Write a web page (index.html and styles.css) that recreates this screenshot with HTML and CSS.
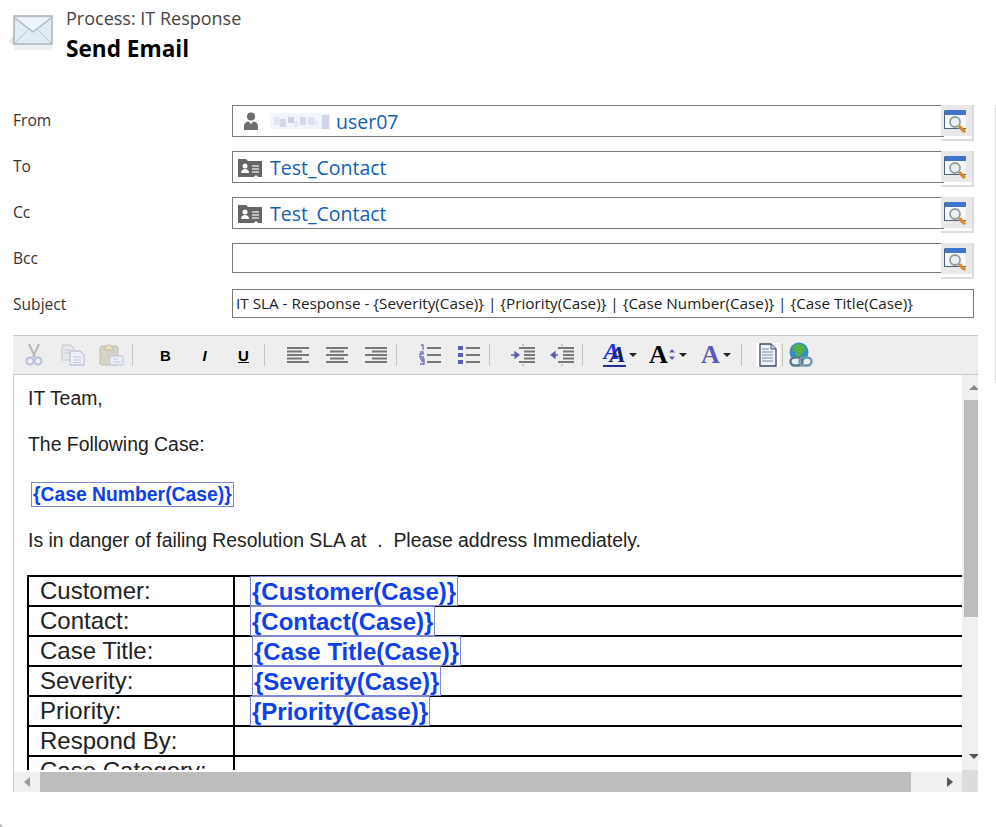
FILE: index.html
```html
<!DOCTYPE html>
<html lang="en">
<head>
  <meta charset="UTF-8">
  <title>Send Email</title>
  <link rel="stylesheet" href="styles.css">
</head>
<body>
  <div class="edge-line"></div>
  <div class="corner-mark"></div>

  <svg width="0" height="0" class="defs">
    <defs>
      <symbol id="lookup" viewBox="0 0 24 24">
        <path d="M0.500 0.500h21v18h-21z" fill="#f6f8fb"/>
        <path d="M0.500 19V0.500M0.500 18.500H22" stroke="#4e5f7c" fill="none"/>
        <rect x="1" y="0" width="21" height="5" fill="#3f73cc"/>
        <circle cx="11" cy="12" r="5" fill="#e9f0f0" stroke="#8f9e9e" stroke-width="1.800"/>
        <path d="M16 17l4 4" stroke="#d98a2b" stroke-width="3.400" stroke-linecap="round"/>
      </symbol>
      <symbol id="card" viewBox="0 0 24 20">
        <path d="M0 2h8l2 2h14v16h-4l-1-1.500h-2l-1 1.500H0z" fill="#666"/>
        <circle cx="7" cy="9" r="2.500" fill="#fff"/>
        <path d="M3 16c0-3 2-4 4-4s4 1 4 4z" fill="#fff"/>
        <path d="M14 9h7M14 12h7M14 15h7" stroke="#ddd" stroke-width="1.500"/>
      </symbol>
    </defs>
  </svg>

  <header class="page-head">
    <svg class="mail-icon" width="44" height="42" viewBox="0 0 44 42">
      <path d="M0 27l6 6V20z" fill="#e2e6e6"/>
      <rect x="5" y="2" width="38" height="28" fill="#dfecf5" stroke="#a9b3b8" stroke-width="1.500"/>
      <path d="M6 4l18 14L42 4" fill="#eef5fa" stroke="#a9b6bd" stroke-width="1.300"/>
      <path d="M6 29l14-14M42 29L28 15" fill="none" stroke="#b6c4cc"/>
      <rect x="5" y="31" width="38" height="5" fill="#eef0f0"/>
    </svg>
    <div class="head-text">
      <div class="process">Process: IT Response</div>
      <h1>Send Email</h1>
    </div>
  </header>

  <form class="mail-form">
    <div class="row">
      <label>From</label>
      <div class="field">
        <svg class="person" width="16" height="20" viewBox="0 0 16 20">
          <circle cx="8" cy="5.500" r="4" fill="#6e6e6e"/>
          <path d="M1 19v-4c0-3 3-4.500 4.500-4.500L8 13l2.500-2.500C12 10.500 15 12 15 15v4z" fill="#6e6e6e"/>
        </svg>
        <svg class="blurred" width="60" height="16" viewBox="0 0 60 16">
          <rect width="60" height="16" fill="#f2f5fb"/>
          <rect x="4" y="4" width="6" height="8" fill="#e2e6f4"/>
          <rect x="10" y="6" width="6" height="8" fill="#d3d8ec"/>
          <rect x="18" y="4" width="6" height="6" fill="#ccd2ea"/>
          <rect x="24" y="8" width="4" height="6" fill="#e4e7f4"/>
          <rect x="30" y="4" width="6" height="8" fill="#d3d8ec"/>
          <rect x="38" y="4" width="6" height="8" fill="#dde1f1"/>
          <rect x="44" y="8" width="4" height="4" fill="#e8ebf5"/>
          <rect x="52" y="2" width="7" height="14" fill="#ced4ea"/>
        </svg>
        <a class="link">user07</a>
      </div>
      <div class="lookup"><svg width="24" height="24"><use href="#lookup"/></svg></div>
    </div>
    <div class="row">
      <label>To</label>
      <div class="field">
        <svg class="card" width="24" height="20"><use href="#card"/></svg>
        <a class="link">Test_Contact</a>
      </div>
      <div class="lookup"><svg width="24" height="24"><use href="#lookup"/></svg></div>
    </div>
    <div class="row">
      <label>Cc</label>
      <div class="field">
        <svg class="card" width="24" height="20"><use href="#card"/></svg>
        <a class="link">Test_Contact</a>
      </div>
      <div class="lookup"><svg width="24" height="24"><use href="#lookup"/></svg></div>
    </div>
    <div class="row">
      <label>Bcc</label>
      <div class="field empty"></div>
      <div class="lookup"><svg width="24" height="24"><use href="#lookup"/></svg></div>
    </div>
    <div class="row">
      <label>Subject</label>
      <div class="subject">IT SLA - Response - {Severity(Case)} | {Priority(Case)} | {Case Number(Case)} | {Case Title(Case)}</div>
    </div>
  </form>

  <section class="editor">
    <div class="toolbar">
      <span class="tool"><svg width="18" height="24" viewBox="0 0 18 24"><path d="M4 1l6 13M14 1L8 14" stroke="#b9b9b9" stroke-width="2" fill="none"/><circle cx="5" cy="18" r="3.500" fill="none" stroke="#b7bfe0" stroke-width="2"/><circle cx="13" cy="18" r="3.500" fill="none" stroke="#b7bfe0" stroke-width="2"/></svg></span>
      <span class="tool"><svg width="24" height="22" viewBox="0 0 24 22"><path d="M1 1h9l3 3v12H1z" fill="#e8e8e8" stroke="#c4c4c4"/><path d="M3 6h6M3 9h6" stroke="#c8c8c8"/><path d="M9 7h10l4 4v10H9z" fill="#eef0f6" stroke="#bfc4dc" stroke-width="1.300"/><path d="M12 13h8M12 16h8M12 18.500h8" stroke="#c2c6dc"/></svg></span>
      <span class="tool"><svg width="25" height="24" viewBox="0 0 25 24"><rect x="1" y="3" width="18" height="19" rx="2" fill="#d6d2c4" stroke="#c2c0b4"/><path d="M6 5l3-3h2l3 3v2H6z" fill="#e8e2bc" stroke="#bdbdae"/><path d="M11 13h13v9H11z" fill="#edf0f7" stroke="#bfc4dc"/><path d="M14 16h5M14 19h8" stroke="#c2c6dc"/></svg></span>
      <span class="sep"></span>
      <span class="tool fmt">B</span>
      <span class="tool fmt italic">I</span>
      <span class="tool fmt under">U</span>
      <span class="sep"></span>
      <span class="tool"><svg width="22" height="18" viewBox="0 0 22 18"><path d="M0 2h22M0 5.500h15M0 9h22M0 12.500h15M0 16h22" stroke="#777" stroke-width="2"/></svg></span>
      <span class="tool"><svg width="22" height="18" viewBox="0 0 22 18"><path d="M0 2h22M4 5.500h14M0 9h22M4 12.500h14M0 16h22" stroke="#777" stroke-width="2"/></svg></span>
      <span class="tool"><svg width="22" height="18" viewBox="0 0 22 18"><path d="M0 2h22M7 5.500h15M0 9h22M7 12.500h15M0 16h22" stroke="#777" stroke-width="2"/></svg></span>
      <span class="sep"></span>
      <span class="tool"><svg width="22" height="22" viewBox="0 0 22 22"><path d="M8 4h14M8 11h14M8 18h14" stroke="#777" stroke-width="2"/><path d="M2 1h2v5M1 8h3v2H1v3h4M1 15h4v2H2h3v3H1" fill="none" stroke="#6d6db8" stroke-width="1.300"/></svg></span>
      <span class="tool"><svg width="22" height="20" viewBox="0 0 22 20"><path d="M8 3h14M8 10h14M8 17h14" stroke="#777" stroke-width="2"/><path d="M0 1h5v4H0zM0 8h5v4H0zM0 15h5v4H0z" fill="#5c5cb0"/></svg></span>
      <span class="sep"></span>
      <span class="tool"><svg width="24" height="24" viewBox="0 0 24 24"><path d="M12 1v2M12 21v2" stroke="#999"/><path d="M8 5h16M13 8.500h11M13 12h11M13 15.500h11M8 19h16" stroke="#777" stroke-width="2"/><path d="M0 12h6M4 9l4 3-4 3z" stroke="#5c5cb0" stroke-width="1.300" fill="#5c5cb0"/></svg></span>
      <span class="tool"><svg width="24" height="24" viewBox="0 0 24 24"><path d="M12 1v2M12 21v2" stroke="#999"/><path d="M8 5h16M13 8.500h11M13 12h11M13 15.500h11M8 19h16" stroke="#777" stroke-width="2"/><path d="M8 12H2M5 9l-4 3 4 3z" stroke="#5c5cb0" stroke-width="1.300" fill="#5c5cb0"/></svg></span>
      <span class="sep"></span>
      <span class="tool wide"><span class="big-a colored">A</span><span class="caret"></span></span>
      <span class="tool wide"><span class="big-a black">A</span><svg width="8" height="12" viewBox="0 0 8 12"><path d="M4 0l3 3.500H1zM4 11L1 7.500h6z" fill="#5c5cb0"/></svg><span class="caret"></span></span>
      <span class="tool wide"><span class="big-a purple">A</span><span class="caret"></span></span>
      <span class="sep"></span>
      <span class="doc"><svg width="18" height="24" viewBox="0 0 18 24"><path d="M1 1h11l5 5v17H1z" fill="#eef2f8" stroke="#3b4a68" stroke-width="1.300"/><path d="M3 6h7M3 9h11M3 12h11M3 15h11M3 18h11" stroke="#7f8aa0"/><path d="M12 1v5h5" fill="#cfd6e4" stroke="#3b4a68"/></svg></span>
      <span class="sep small"></span>
      <span class="web"><svg width="24" height="26" viewBox="0 0 24 26"><circle cx="10" cy="10" r="9.500" fill="#2f8fc8"/><path d="M4 4c3-2 7-3 10-1l3 5-4 4-3 6-3-3-1-5-3-2z" fill="#53b04a"/><rect x="1.500" y="15.500" width="12" height="8" rx="4" fill="#e8eef2" stroke="#56788f" stroke-width="2.400"/><rect x="10.500" y="15.500" width="12" height="8" rx="4" fill="none" stroke="#7495ab" stroke-width="2.400"/></svg></span>
    </div>

    <div class="editor-body">
      <div class="content">
        <p class="first">IT Team,</p>
        <p>The Following Case:</p>
        <div class="case-no"><span class="token">{Case Number(Case)}</span></div>
        <p class="after-case">Is in danger of failing Resolution SLA at &nbsp;.&nbsp; Please address Immediately.</p>
        <table class="case-table">
          <tr><td class="name">Customer:</td><td class="val"><span class="token">{Customer(Case)}</span></td></tr>
          <tr><td class="name">Contact:</td><td class="val"><span class="token">{Contact(Case)}</span></td></tr>
          <tr><td class="name">Case Title:</td><td class="val shift"><span class="token">{Case Title(Case)}</span></td></tr>
          <tr><td class="name">Severity:</td><td class="val shift"><span class="token">{Severity(Case)}</span></td></tr>
          <tr><td class="name">Priority:</td><td class="val"><span class="token">{Priority(Case)}</span></td></tr>
          <tr><td class="name">Respond By:</td><td class="val"></td></tr>
          <tr><td class="name">Case Category:</td><td class="val"></td></tr>
        </table>
      </div>
      <div class="vscroll">
        <span class="arrow up"></span>
        <span class="vthumb"></span>
        <span class="arrow down"></span>
      </div>
      <div class="hscroll">
        <span class="arrow left"></span>
        <span class="hthumb"></span>
        <span class="arrow right"></span>
      </div>
      <div class="scroll-corner"></div>
    </div>
  </section>
</body>
</html>
```

FILE: styles.css
```css
body {
  margin: 0;
  height: 827px;
  overflow: hidden;
  background: white;
  font-family: "Open Sans", sans-serif;
  color: #333;
  position: relative;
}
.defs {
  position: absolute;
}
.edge-line {
  position: absolute;
  left: 995px;
  top: 105px;
  width: 1px;
  height: 278px;
  background: #dcdcdc;
}
.corner-mark {
  position: absolute;
  left: 0;
  bottom: 0;
  width: 0;
  height: 0;
  border-left: 3px solid #bbb;
  border-top: 4px solid transparent;
}

.page-head {
  display: flex;
  height: 105px;
  padding-left: 9px;
  box-sizing: border-box;
}
.mail-icon {
  margin-top: 14px;
  margin-right: 13px;
  flex: none;
}
.process {
  font-size: 18px;
  line-height: 22px;
  margin-top: 7px;
  color: #444;
}
.page-head h1 {
  margin: 5px 0 0;
  font-size: 22.6px;
  line-height: 30px;
  font-weight: bold;
  color: black;
}

.mail-form {
  padding-left: 13px;
}
.row {
  display: flex;
  align-items: flex-start;
  height: 46px;
}
.row label {
  width: 219px;
  flex: none;
  font-size: 15.6px;
  line-height: 30px;
}
.field {
  width: 709px;
  height: 32px;
  box-sizing: border-box;
  border: 1px solid #7b7b7b;
  border-right: none;
  display: flex;
  align-items: center;
  position: relative;
}
.field::after {
  content: "";
  position: absolute;
  right: -3px;
  bottom: -1px;
  width: 3px;
  height: 1px;
  background: #7b7b7b;
  z-index: 1;
}
.field.empty {
  height: 30px;
}
.field.empty::after {
  display: none;
}
.person {
  margin-left: 10px;
}
.blurred {
  margin-left: 11px;
  margin-right: 6px;
}
.card {
  margin-left: 5px;
  margin-right: 8px;
}
.link {
  font-size: 19.5px;
  color: #1160b7;
  margin-top: 1px;
}
.lookup {
  width: 33px;
  height: 36px;
  flex: none;
  box-sizing: border-box;
  padding: 5px 0 0 3px;
  background: linear-gradient(#e8e8e8 31px, white 31px);
  border-right: 2px solid #ddd;
  border-bottom: 2px solid #ddd;
}
.lookup svg {
  display: block;
}
.subject {
  width: 742px;
  height: 29px;
  box-sizing: border-box;
  border: 1px solid #7b7b7b;
  font-size: 15.27px;
  line-height: 27px;
  padding-left: 3px;
  color: #222;
  white-space: nowrap;
  overflow: hidden;
}

.editor {
  margin-left: 13px;
  width: 965px;
}
.toolbar {
  height: 40px;
  box-sizing: border-box;
  background: #eee;
  border-top: 1px solid #c8c8c8;
  border-bottom: 1px solid #c8c8c8;
  display: flex;
  align-items: center;
  padding-left: 1px;
}
.tool {
  width: 39px;
  flex: none;
  height: 26px;
  display: flex;
  align-items: center;
  justify-content: center;
}
.tool.wide {
  width: 48px;
}
.sep {
  width: 1px;
  height: 22px;
  flex: none;
  margin: 0 13px 0 1px;
  background: #c4c4b8;
}
.sep.small {
  margin: 0 6px 0 2px;
}
.fmt {
  font-family: "Liberation Sans", sans-serif;
  font-weight: bold;
  font-size: 15px;
  color: black;
}
.italic {
  font-style: italic;
}
.under {
  text-decoration: underline;
}
.big-a {
  font-family: "Liberation Serif", serif;
  font-weight: bold;
  font-size: 26px;
  line-height: 22px;
}
.big-a.black {
  color: black;
}
.big-a.purple {
  color: #5a5ab4;
}
.big-a.colored {
  color: #14206e;
  font-size: 24px;
  font-style: italic;
  text-shadow: -6px -3px 0 #1a30e8;
  border-bottom: 2px solid #2030a0;
  padding-left: 6px;
}
.caret {
  width: 0;
  height: 0;
  margin-left: 3px;
  border-left: 4px solid transparent;
  border-right: 4px solid transparent;
  border-top: 4px solid #222;
}
.doc {
  width: 24px;
  height: 24px;
  flex: none;
  background: white;
  display: flex;
  align-items: center;
  justify-content: center;
  margin-left: 1px;
}
.web {
  flex: none;
  height: 26px;
}

.editor-body {
  display: grid;
  grid-template-columns: 948px 16px;
  grid-template-rows: 395px 22px;
  border-left: 1px solid #c8c8c8;
}
.content {
  overflow: hidden;
  padding-left: 14px;
  font-family: "Liberation Sans", Arial, sans-serif;
  font-size: 19.4px;
  color: #222;
}
.content p {
  margin: 24px 0 0;
  line-height: 22px;
  white-space: nowrap;
}
.content p.first {
  margin-top: 12px;
}
.content p.after-case {
  margin-top: 22px;
}
.case-no {
  margin: 27px 0 22px 3px;
  line-height: 22px;
}
.token {
  display: inline-block;
  border: 1px solid #8085d6;
  color: #0d3fea;
  font-weight: bold;
  padding: 0 1px;
}
.case-no .token {
  font-size: 19.33px;
  line-height: 22px;
  padding-top: 1px;
}
.case-table {
  border-collapse: collapse;
  table-layout: fixed;
  width: 1100px;
  margin: 24px 0 0 -1px;
  font-size: 24px;
}
.case-table td {
  border: 2px solid black;
  height: 30px;
  padding: 0;
  line-height: 26px;
  box-sizing: border-box;
}
.name {
  width: 206px;
  padding-left: 11px !important;
}
.val {
  padding-left: 15px !important;
}
.val.shift {
  padding-left: 17px !important;
}
.val .token {
  line-height: 27px;
  padding-top: 1px;
  margin: -1px 0;
  vertical-align: top;
}

.vscroll {
  background: #f0f0f0;
  position: relative;
  overflow: hidden;
}
.vthumb {
  position: absolute;
  left: 2px;
  right: 0;
  top: 25px;
  height: 217px;
  background: #bdbdbd;
}
.hscroll {
  background: #f0f0f0;
  margin-top: 2px;
  position: relative;
}
.hthumb {
  position: absolute;
  left: 26px;
  width: 871px;
  top: 0;
  bottom: 0;
  background: #bdbdbd;
}
.scroll-corner {
  background: #dcdcdc;
}
.arrow {
  position: absolute;
  width: 0;
  height: 0;
}
.arrow.up {
  left: 7px;
  top: 10px;
  border-left: 5px solid transparent;
  border-right: 5px solid transparent;
  border-bottom: 5px solid #8a8a8a;
}
.arrow.down {
  left: 7px;
  top: 379px;
  border-left: 5px solid transparent;
  border-right: 5px solid transparent;
  border-top: 5px solid #555;
}
.arrow.left {
  left: 10px;
  top: 5px;
  border-top: 5px solid transparent;
  border-bottom: 5px solid transparent;
  border-right: 6px solid #999;
}
.arrow.right {
  left: 933px;
  top: 5px;
  border-top: 5px solid transparent;
  border-bottom: 5px solid transparent;
  border-left: 6px solid #555;
}
```
